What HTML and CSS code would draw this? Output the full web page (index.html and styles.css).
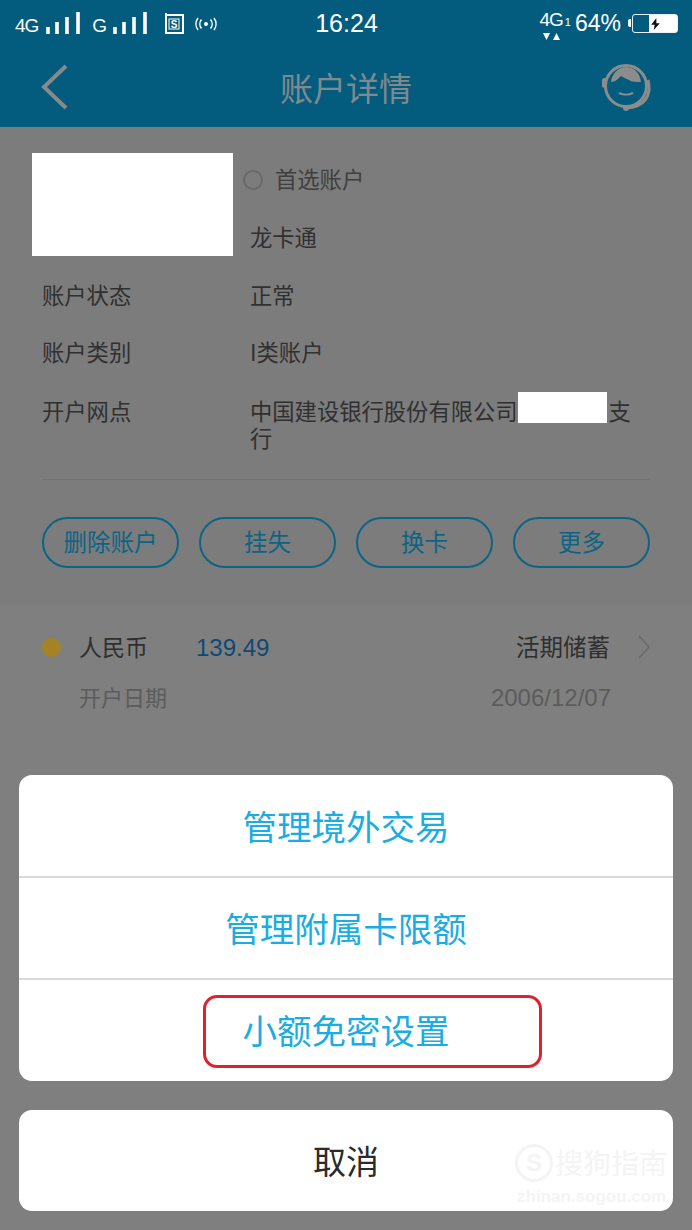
FILE: index.html
```html
<!DOCTYPE html>
<html lang="zh-CN">
<head>
    <meta charset="UTF-8">
    <meta name="viewport" content="width=device-width, initial-scale=1.0">
    <title>账户详情</title>
    <link rel="stylesheet" href="styles.css">
</head>
<body>
    <div class="screen">
        <div class="topbar">
            <div class="status">
                <div class="status-left">
                    <span class="net">4G</span>
                    <svg class="bars" width="36" height="22" viewBox="0 0 36 22"><path d="M3 15v7M12 10v12M22 5v17M33 0v22" stroke="#fff" stroke-width="3.6"/></svg>
                    <span class="net net-g">G</span>
                    <svg class="bars" width="36" height="22" viewBox="0 0 36 22"><path d="M3 15v7M12 10v12M22 5v17M33 0v22" stroke="#fff" stroke-width="3.6"/></svg>
                    <svg class="sim" width="20" height="21" viewBox="0 0 20 21"><path d="M1 2h18v18H2V0" fill="none" stroke="#fff" stroke-width="2"/><rect x="5" y="6" width="10" height="10" fill="none" stroke="#fff" stroke-width="1"/><text x="10" y="15" text-anchor="middle" class="sim-s">S</text></svg>
                    <svg class="hotspot" width="22" height="14" viewBox="0 0 22 14"><circle cx="11" cy="7" r="2" fill="#fff"/><path d="M6.500 2.500a7 7 0 0 0 0 9M15.500 2.500a7 7 0 0 1 0 9M3 1a10 10 0 0 0 0 12M19 1a10 10 0 0 1 0 12" fill="none" stroke="#fff" stroke-width="1.500"/></svg>
                </div>
                <div class="clock">16:24</div>
                <div class="status-right">
                    <div class="net-stack">
                        <span class="net-big">4G<small>1</small></span>
                        <svg width="18" height="7" viewBox="0 0 18 7"><path d="M0 0h7L3.500 7zM10 7h7l-3.500-7z" fill="#fff"/></svg>
                    </div>
                    <span class="percent">64%</span>
                    <div class="battery">
                        <div class="battery-fill">
                            <svg width="11" height="12" viewBox="0 0 12 14"><path d="M7 0L1 8h4l-1 6 7-8H7z" fill="#111"/></svg>
                        </div>
                    </div>
                </div>
            </div>
            <div class="header">
                <svg class="back" width="30" height="48" viewBox="0 0 30 48"><path d="M26 3L4 24l22 21" fill="none" stroke="#858a8c" stroke-width="4"/></svg>
                <h1>账户详情</h1>
                <svg class="agent" width="52" height="50" viewBox="0 0 52 50">
                    <circle cx="25" cy="24" r="20.500" fill="none" stroke="#8c8c8c" stroke-width="3"/>
                    <path d="M10 20C11 12 17 5 25 5S39 11 40 20C35 20 31 20 28 18 25 17 22 15 20 14 17 17 14 20 10 20z" fill="#8c8c8c"/>
                    <rect x="1" y="16" width="5" height="10" rx="2.500" fill="#8c8c8c"/>
                    <path d="M47 18C51 33 44 45 25 46" fill="none" stroke="#8c8c8c" stroke-width="3"/>
                    <circle cx="25" cy="46" r="3" fill="#8c8c8c"/>
                    <path d="M18 31c4 2 10 2 14 0" fill="none" stroke="#8c8c8c" stroke-width="2"/>
                </svg>
            </div>
        </div>

        <section class="account">
            <div class="account-head">
                <div class="mask mask-card"></div>
                <div class="head-side">
                    <div class="preferred"><span class="radio"></span>首选账户</div>
                    <div class="card-name">龙卡通</div>
                </div>
            </div>
            <div class="row row-first"><div class="row-label">账户状态</div><div class="row-value">正常</div></div>
            <div class="row row-second"><div class="row-label">账户类别</div><div class="row-value">I类账户</div></div>
            <div class="row row-branch">
                <div class="row-label">开户网点</div>
                <div class="row-value">中国建设银行股份有限公司<span class="mask mask-branch"></span>支<br>行</div>
            </div>
            <div class="actions">
                <div class="pill">删除账户</div>
                <div class="pill">挂失</div>
                <div class="pill">换卡</div>
                <div class="pill">更多</div>
            </div>
        </section>

        <section class="balance">
            <div class="balance-main">
                <span class="dot"></span>
                <span class="currency">人民币</span>
                <span class="amount">139.49</span>
                <span class="kind">活期储蓄</span>
                <svg class="chev" width="14" height="24" viewBox="0 0 14 24"><path d="M2 1l10 11L2 23" fill="none" stroke="#6a6a6a" stroke-width="1.500"/></svg>
            </div>
            <div class="balance-date">
                <span>开户日期</span>
                <span class="open-date">2006/12/07</span>
            </div>
        </section>

        <!-- action sheet sits over the dimmed page -->
        <div class="sheet">
            <div class="sheet-group">
                <div class="sheet-item">管理境外交易</div>
                <div class="sheet-item">管理附属卡限额</div>
                <div class="sheet-item sheet-marked">小额免密设置<span class="red-box"></span></div>
            </div>
            <div class="sheet-cancel">取消</div>
        </div>

        <div class="watermark">
            <svg width="40" height="40" viewBox="0 0 40 40"><circle cx="20" cy="20" r="17.500" fill="none" stroke="#f4f4f4" stroke-width="3"/><text x="20" y="28" text-anchor="middle" class="mark-s">S</text></svg>
            <span class="mark-name">搜狗指南</span>
            <span class="mark-url">zhinan.sogou.com</span>
        </div>
    </div>
</body>
</html>
```

FILE: styles.css
```css
* {
    box-sizing: border-box;
}

html, body {
    margin: 0;
    padding: 0;
}

body {
    font-family: "Noto Sans CJK SC", "Liberation Sans", sans-serif;
    background-color: #7f7f7f;
}

.screen {
    position: relative;
    width: 692px;
    height: 1230px;
    overflow: hidden;
    background-color: #7f7f7f;
}

/* Status bar and title */
.topbar {
    height: 127px;
    background-color: #035c7e;
}

.status {
    display: flex;
    align-items: center;
    justify-content: space-between;
    height: 47px;
    padding: 0 14px 0 15px;
    color: #fff;
}

.status-left,
.status-right {
    display: flex;
    align-items: center;
    width: 260px;
}

.status-right {
    justify-content: flex-end;
}

.net {
    font-family: "Liberation Sans", sans-serif;
    font-size: 19px;
    letter-spacing: -1px;
    margin-top: 4px;
    margin-right: 7px;
}

.net-g {
    margin-left: 11px;
    margin-right: 6px;
}

.bars {
    margin-top: -1px;
}

.sim {
    margin-left: 16px;
    margin-top: -1px;
}

.sim-s {
    font-family: "Liberation Sans", sans-serif;
    font-size: 10px;
    font-weight: bold;
    fill: #fff;
}

.hotspot {
    margin-left: 11px;
}

.clock {
    font-family: "Liberation Sans", sans-serif;
    font-size: 25px;
}

.net-stack {
    display: flex;
    flex-direction: column;
    align-items: center;
    margin-top: 2px;
}

.net-big {
    font-family: "Liberation Sans", sans-serif;
    font-size: 19px;
    line-height: 19px;
    letter-spacing: -1px;
}

.net-big small {
    font-size: 11px;
    margin-left: 2px;
}

.net-stack svg {
    display: block;
    margin-top: 1px;
    margin-right: 6px;
}

.percent {
    font-family: "Liberation Sans", sans-serif;
    font-size: 23px;
    margin-left: 5px;
}

.battery {
    position: relative;
    width: 46px;
    height: 19px;
    margin-left: 11px;
    border: 1.500px solid #e6f2f7;
    border-radius: 3px;
}

.battery::before {
    content: "";
    position: absolute;
    left: -5px;
    top: 4px;
    width: 3px;
    height: 8px;
    background-color: #fff;
    border-radius: 2px 0 0 2px;
}

.battery-fill {
    display: flex;
    align-items: center;
    height: 100%;
    width: 28px;
    margin-left: auto;
    padding-left: 1px;
    background-color: #fff;
}

.header {
    position: relative;
    display: flex;
    align-items: center;
    justify-content: space-between;
    height: 80px;
    padding: 0 39px 0 40px;
}

.header h1 {
    position: absolute;
    left: 0;
    right: 0;
    margin: 0;
    text-align: center;
    font-size: 33px;
    font-weight: 400;
    color: #80898d;
}

/* Account block */
.account {
    height: 477px;
    padding: 26px 42px 0;
    background-color: #7c7c7c;
    font-size: 22.3px;
    color: #303030;
}

.account-head {
    display: flex;
    margin-left: -10px;
}

.mask {
    background-color: #fff;
}

.mask-card {
    width: 201px;
    height: 103px;
}

.head-side {
    margin-left: 10px;
}

.preferred {
    display: flex;
    align-items: center;
    height: 50px;
    color: #3f3f3f;
}

.radio {
    width: 20px;
    height: 20px;
    margin-top: 4px;
    margin-right: 12px;
    border: 2px solid #686868;
    border-radius: 50%;
}

.card-name {
    height: 49px;
    margin-top: 4px;
    padding-left: 7px;
    line-height: 58px;
}

.row {
    display: flex;
    height: 58px;
    line-height: 32px;
    padding-top: 21px;
}

.row-first {
    padding-top: 22px;
}

.row-second {
    height: 59px;
}

.row-label {
    width: 208px;
    flex: none;
}

.row-value {
    width: 381px;
    line-height: 27px;
    padding-top: 3px;
}

.row-branch {
    height: 106px;
}

.mask-branch {
    display: inline-block;
    width: 89px;
    height: 31px;
    vertical-align: top;
    margin-top: -5px;
    margin-right: 2px;
    margin-bottom: -7px;
}

.actions {
    display: flex;
    justify-content: space-between;
    padding-top: 37px;
    border-top: 1px solid #737373;
}

.pill {
    display: flex;
    align-items: center;
    justify-content: center;
    width: 137px;
    height: 51px;
    padding-bottom: 3px;
    border: 2px solid #0d6585;
    border-radius: 26px;
    font-size: 23.500px;
    color: #0c6485;
}

/* Balance */
.balance {
    padding: 0 42px;
    font-size: 22.500px;
}

.balance-main {
    display: flex;
    align-items: center;
    height: 44px;
    margin-top: 20px;
    color: #2f2f2f;
}

.dot {
    width: 19px;
    height: 19px;
    margin-top: 2px;
    margin-right: 18px;
    border-radius: 50%;
    background-color: #a58325;
}

.currency {
    width: 117px;
    font-size: 23px;
}

.amount {
    padding-top: 4px;
    font-family: "Liberation Sans", sans-serif;
    font-size: 24px;
    color: #0f4a75;
}

.kind {
    margin-left: auto;
    margin-right: 27px;
    font-size: 23.500px;
}

.chev {
    margin-top: 2px;
    margin-right: -1px;
}

.balance-date {
    display: flex;
    justify-content: space-between;
    align-items: center;
    height: 40px;
    margin-top: 8px;
    padding: 0 39px 0 37px;
    font-size: 22px;
    color: #5c5c5c;
}

.open-date {
    padding-top: 4px;
    font-family: "Liberation Sans", sans-serif;
    font-size: 24px;
}

/* Action sheet */
.sheet {
    position: absolute;
    left: 19px;
    right: 19px;
    top: 775px;
}

.sheet-group {
    background-color: #fff;
    border-radius: 13px;
    overflow: hidden;
}

.sheet-item {
    position: relative;
    display: flex;
    align-items: center;
    justify-content: center;
    height: 102px;
    padding-bottom: 2px;
    font-size: 34.500px;
    color: #1aace4;
    border-bottom: 2px solid #d9d9d9;
}

.sheet-item:first-child {
    height: 103px;
}

.sheet-marked {
    height: 101px;
    padding-bottom: 4px;
    border-bottom: none;
}

.red-box {
    position: absolute;
    left: 184px;
    top: 15px;
    width: 339px;
    height: 73px;
    border: 3px solid #e0202c;
    border-radius: 14px;
}

.sheet-cancel {
    display: flex;
    align-items: center;
    justify-content: center;
    height: 101px;
    margin-top: 29px;
    padding-bottom: 2px;
    background-color: #fff;
    border-radius: 13px;
    font-size: 33px;
    color: #2b2b2b;
}

.watermark {
    position: absolute;
    left: 514px;
    top: 1143px;
    width: 160px;
    height: 64px;
    color: #f4f4f4;
}

.watermark svg {
    position: absolute;
    left: 0;
    top: 0;
}

.mark-s {
    font-family: "Liberation Sans", sans-serif;
    font-size: 24px;
    font-weight: bold;
    fill: #f4f4f4;
}

.mark-name {
    position: absolute;
    left: 41px;
    top: 2px;
    font-size: 28px;
    line-height: 34px;
    white-space: nowrap;
}

.mark-url {
    position: absolute;
    left: 3px;
    top: 45px;
    font-family: "Liberation Sans", sans-serif;
    font-size: 17px;
    font-weight: bold;
    line-height: 18px;
    white-space: nowrap;
}
```
